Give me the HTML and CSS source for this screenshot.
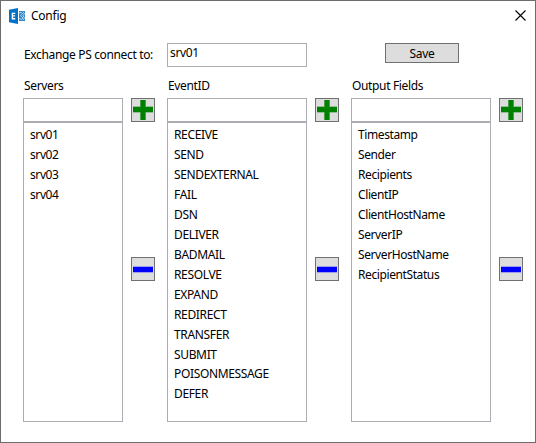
FILE: index.html
```html
<!DOCTYPE html>
<html lang="en">
<head>
<meta charset="utf-8">
<title>Config</title>
<link rel="stylesheet" href="styles.css">
</head>
<body>
<svg class="defs" aria-hidden="true">
  <symbol id="plus" viewBox="0 0 20 20"><path fill="#8fc08f" d="M7 0h6v6h7v7h-7v7H7v-7H0V6h7z"/><path fill="#008000" d="M7.500 0h5v7H20v5h-7.500v8h-5v-8H0V7h7.500z"/></symbol>
  <symbol id="minus" viewBox="0 0 20 20"><path fill="#a0a0e8" d="M0 7h20v7H0z"/><path fill="#0000ff" d="M0 8h20v5H0z"/></symbol>
</svg>
<div class="window">
  <header class="titlebar">
    <svg class="logo" width="16" height="16" viewBox="0 0 16 16">
      <path fill="#0072c6" d="M0 1.800 9 0v16L0 14.200z"/>
      <path fill="#fff" d="M2.700 4.800h3.600v1.300H4.100v1.200h2v1.300h-2v1.500h2.200v1.300H2.700z"/>
      <path fill="#2f86c6" d="M10 3h6v10h-6z"/>
      <path fill="none" stroke="#d5e8f5" stroke-width=".8" d="M10 5.200l2-1 1.500 1.500-2 2L14 10l-1.500 1.500-2.500-1M14 3.800l1.500 2-1.500 2 1.500 2.200-1.500 2"/>
    </svg>
    <h1 class="title">Config</h1>
    <svg class="close" width="11" height="11" viewBox="0 0 11 11"><path stroke="#000" stroke-width="1.100" d="M.5.5l10 10M10.500.5l-10 10"/></svg>
  </header>
  <div class="connect">
    <label class="connect-label">Exchange PS connect to:</label>
    <div class="box connect-input">srv01</div>
    <button class="btn save">Save</button>
  </div>
  <main class="columns">
    <section class="column">
      <h2 class="heading">Servers</h2>
      <div class="group">
        <div class="fields narrow">
          <div class="box"></div>
          <ul class="list"><li>srv01</li><li>srv02</li><li>srv03</li><li>srv04</li></ul>
        </div>
        <div class="actions">
          <button class="btn icon"><svg width="20" height="20"><use href="#plus"/></svg></button>
          <button class="btn icon"><svg width="20" height="20"><use href="#minus"/></svg></button>
        </div>
      </div>
    </section>
    <section class="column">
      <h2 class="heading">EventID</h2>
      <div class="group">
        <div class="fields">
          <div class="box"></div>
          <ul class="list caps"><li>RECEIVE</li><li>SEND</li><li>SENDEXTERNAL</li><li>FAIL</li><li>DSN</li><li>DELIVER</li><li>BADMAIL</li><li>RESOLVE</li><li>EXPAND</li><li>REDIRECT</li><li>TRANSFER</li><li>SUBMIT</li><li>POISONMESSAGE</li><li>DEFER</li></ul>
        </div>
        <div class="actions">
          <button class="btn icon"><svg width="20" height="20"><use href="#plus"/></svg></button>
          <button class="btn icon"><svg width="20" height="20"><use href="#minus"/></svg></button>
        </div>
      </div>
    </section>
    <section class="column">
      <h2 class="heading">Output Fields</h2>
      <div class="group">
        <div class="fields">
          <div class="box"></div>
          <ul class="list"><li>Timestamp</li><li>Sender</li><li>Recipients</li><li>ClientIP</li><li>ClientHostName</li><li>ServerIP</li><li>ServerHostName</li><li>RecipientStatus</li></ul>
        </div>
        <div class="actions">
          <button class="btn icon"><svg width="20" height="20"><use href="#plus"/></svg></button>
          <button class="btn icon"><svg width="20" height="20"><use href="#minus"/></svg></button>
        </div>
      </div>
    </section>
  </main>
</div>
</body>
</html>
```
FILE: styles.css
```css
* { box-sizing: border-box; }
body { margin: 0; font: 12px/16px "Noto Sans", "Open Sans", sans-serif; letter-spacing: -0.35px; color: #000; }
.defs { display: none; }
.window { width: 536px; height: 443px; border: 1px solid #6d6c6e; background: #fff; }
.titlebar { display: flex; align-items: center; height: 30px; padding: 0 9px 0 8px; }
.logo { flex: none; margin-top: -1px; }
.title { flex: 1; margin: 0 0 0 6px; font-size: 12px; font-weight: 400; letter-spacing: -0.25px; }
.close { flex: none; margin-top: -2px; }
.connect { display: flex; align-items: flex-start; height: 24px; margin: 12px 0 0 23px; }
.connect-label { width: 143px; padding-top: 4px; }
.box { height: 24px; border: 1px solid #abadb3; background: #fff; }
.connect-input { width: 140px; padding: 1px 2px; }
.btn { display: block; margin: 0; padding: 0; border: 1px solid #707070; border-radius: 0; background: #ddd; color: #000; font: inherit; letter-spacing: inherit; }
.save { width: 74px; height: 20px; margin-left: 78px; padding-top: 1px; line-height: 18px; }
.columns { display: flex; gap: 12px; margin: 11px 0 0 22px; }
.heading { height: 20px; margin: 0 0 0 1px; font-size: 12px; font-weight: 400; }
.group { display: flex; gap: 8px; }
.fields { width: 140px; }
.narrow { width: 100px; }
.list { height: 300px; margin: 0; padding: 2px 6px; border: 1px solid #abadb3; list-style: none; line-height: 20px; letter-spacing: -0.4px; }
.caps { padding-top: 2.03px; line-height: 19.9532px; letter-spacing: -0.35px; }
.icon { width: 24px; height: 24px; }
.icon svg { display: block; margin: 1px; }
.actions { display: flex; flex-direction: column; gap: 135px; }
```
